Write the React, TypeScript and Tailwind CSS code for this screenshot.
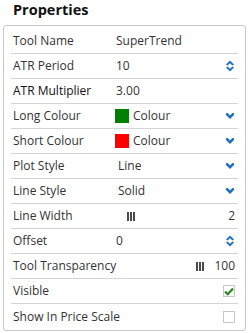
import React from "react";

const font = { fontFamily: '"Open Sans", "Liberation Sans", sans-serif' };

function Spinner() {
  return (
    <svg width="8" height="12" viewBox="0 0 8 12" className="shrink-0">
      <path d="M0 4.6 L4 0.6 L8 4.6 L6.4 5.6 L4 3.3 L1.6 5.6 Z" fill="#1f6fc0" />
      <path d="M0 7.4 L4 11.4 L8 7.4 L6.4 6.4 L4 8.7 L1.6 6.4 Z" fill="#1f6fc0" />
    </svg>
  );
}

function Chevron() {
  return (
    <svg width="8" height="6" viewBox="0 0 8 6" className="shrink-0">
      <path d="M1 1.2 L4 4.2 L7 1.2" fill="none" stroke="#1f6fc0" strokeWidth="2.5" strokeLinecap="square" />
    </svg>
  );
}

function Bars() {
  return (
    <div className="flex h-[9px] gap-[1px]">
      <div className="w-[2px] bg-[#4a4a4a]" />
      <div className="w-[2px] bg-[#4a4a4a]" />
      <div className="w-[2px] bg-[#4a4a4a]" />
    </div>
  );
}

function Check({ checked }: { checked?: boolean }) {
  return (
    <div className="w-[12px] h-[12px] border border-[#c8c8c8] bg-white flex items-center justify-center">
      {checked && (
        <svg width="10" height="9" viewBox="0 0 10 9">
          <path d="M1 4.5 L3.8 7.2 L9 1.5" fill="none" stroke="#2a8a1e" strokeWidth="2.2" />
        </svg>
      )}
    </div>
  );
}

function Row({ label, children, last, dark }: { label: string; children?: React.ReactNode; last?: boolean; dark?: boolean }) {
  return (
    <div className={`flex items-center h-[25px] pl-[2px] pr-[4px] ${last ? "" : "border-b border-[#d4d4d4]"}`}>
      <div className={`w-[103px] shrink-0 whitespace-nowrap ${dark ? "text-[#111]" : "text-[#333]"}`}>{label}</div>
      <div className="flex-1 flex items-center text-[#333] min-w-0">{children}</div>
    </div>
  );
}

export default function App() {
  return (
    <div className="w-[248px] h-[333px] bg-white text-[12px] leading-none" style={font}>
      <div className="h-[25px] pl-[13px] pt-[1px] text-[14.5px] font-bold text-[#111] leading-[18px]">Properties</div>
      <div className="ml-[3px] w-[243px] h-[306px] border border-[#c8c8c8] rounded-[3px] px-[7px] pt-[3px] pb-[2px]">
        <Row label="Tool Name">SuperTrend</Row>
        <Row label="ATR Period">
          <span>10</span>
          <span className="ml-auto"><Spinner /></span>
        </Row>
        <Row label="ATR Multiplier" dark>
          <span>3.00</span>
        </Row>
        <Row label="Long Colour">
          <div className="w-[14px] h-[14px] bg-[#008000] -ml-[1px]" />
          <span className="ml-[4px]">Colour</span>
          <span className="ml-auto"><Chevron /></span>
        </Row>
        <Row label="Short Colour">
          <div className="w-[14px] h-[14px] bg-[#ff0000] -ml-[1px]" />
          <span className="ml-[4px]">Colour</span>
          <span className="ml-auto"><Chevron /></span>
        </Row>
        <Row label="Plot Style">
          <span className="ml-[2px]">Line</span>
          <span className="ml-auto"><Chevron /></span>
        </Row>
        <Row label="Line Style">
          <span className="ml-[2px]">Solid</span>
          <span className="ml-auto"><Chevron /></span>
        </Row>
        <Row label="Line Width">
          <span className="ml-[11px]"><Bars /></span>
          <span className="ml-auto -mr-[1px]">2</span>
        </Row>
        <Row label="Offset">
          <span>0</span>
          <span className="ml-auto"><Spinner /></span>
        </Row>
        <div className="flex items-center h-[25px] pl-[2px] pr-[3px] border-b border-[#d4d4d4] text-[#333]">
          <span className="whitespace-nowrap">Tool Transparency</span>
          <span className="ml-auto"><Bars /></span>
          <span className="ml-[10px]">100</span>
        </div>
        <Row label="Visible">
          <span className="ml-auto -mr-[1px]"><Check checked /></span>
        </Row>
        <Row label="Show In Price Scale" last>
          <span className="ml-auto -mr-[1px]"><Check /></span>
        </Row>
      </div>
    </div>
  );
}
